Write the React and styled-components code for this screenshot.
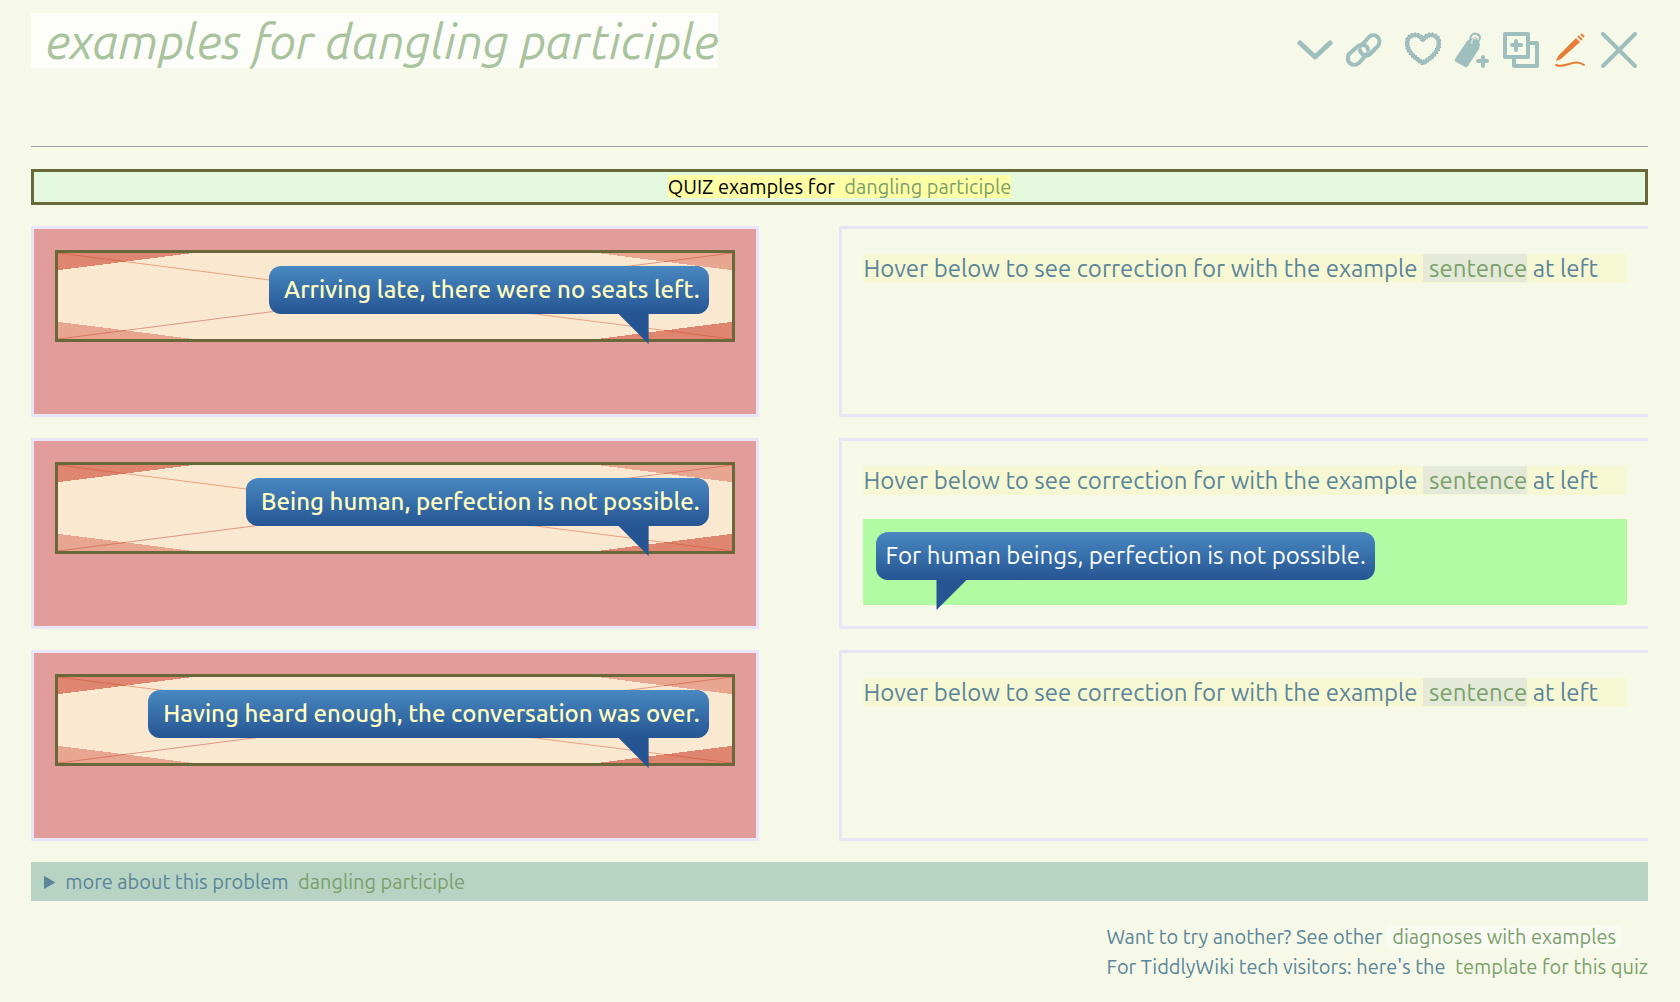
import React, {useState} from 'react'
import styled, {createGlobalStyle} from 'styled-components'


const examples = [
    {id: 1, wrong: 'Arriving late, there were no seats left.', fix: 'When we arrived late, there were no seats left.', open: false},
    {id: 2, wrong: 'Being human, perfection is not possible.', fix: 'For human beings, perfection is not possible.', open: true},
    {id: 3, wrong: 'Having heard enough, the conversation was over.', fix: 'Having heard enough, we ended the conversation.', open: false}
]


const ChevronIcon = () => (
    <svg width="36" height="36" viewBox="0 0 36 36" fill="none" stroke="currentColor" strokeWidth="5" strokeLinecap="round" strokeLinejoin="round">
        <path d="M3 11 L18 25 L33 11" />
    </svg>
)

const LinkIcon = () => (
    <svg width="36" height="36" viewBox="0 0 36 36" fill="none" stroke="currentColor" strokeWidth="4" strokeLinecap="round" strokeLinejoin="round">
        <path d="M15 14 L23 5 C28 0 37 6 32 14 L25 21 C22 25 15 24 14 18" />
        <path d="M21 22 L13 31 C7 36 -1 30 3 22 L11 15 C15 11 22 13 22 18" />
    </svg>
)

const HeartIcon = () => (
    <svg width="36" height="36" viewBox="0 0 36 36" fill="none" strokeLinejoin="round">
        <path d="M18 31 C8 25 2 19 2 11 C2 2 14 0 18 8 C22 0 34 2 34 11 C34 19 28 25 18 31 Z" stroke="#6b8a8a" strokeWidth="5" strokeDasharray="1 2" />
        <path d="M18 31 C8 25 2 19 2 11 C2 2 14 0 18 8 C22 0 34 2 34 11 C34 19 28 25 18 31 Z" stroke="currentColor" strokeWidth="4" />
    </svg>
)

const TagIcon = () => (
    <svg width="36" height="36" viewBox="0 0 36 36" fill="none">
        <path d="M16 7 L22 5 L26 12 L25 17 L14 34 Q13 36 11 35 L2 30 Q0 29 1 27 L13 9 Z" fill="currentColor" />
        <path d="M18 12 C14 6 18 0 23 2 C28 4 26 9 22 12" stroke="currentColor" strokeWidth="2" />
        <path d="M18 12 C17 8 20 5 22 7" stroke="#f6f8e8" strokeWidth="1" />
        <path d="M29 25 V34 M24 29 H33" stroke="currentColor" strokeWidth="4" strokeLinecap="round" />
    </svg>
)

const CloneIcon = () => (
    <svg width="36" height="36" viewBox="0 0 36 36" fill="none" stroke="currentColor" strokeWidth="4" strokeLinejoin="round">
        <path d="M2 2 H25 V25 H2 Z" />
        <path d="M27 11 H34 V34 H11 V27" />
        <path d="M13 9 V18 M9 13 H18" strokeLinecap="round" />
    </svg>
)

const PencilIcon = () => (
    <svg width="36" height="36" viewBox="0 0 36 36">
        <path d="M24 6 L28 10 L9 27 L4 29 L6 24 Z" fill="currentColor" />
        <path d="M26 4 L30 8 M29 2 L32 5" stroke="currentColor" strokeWidth="2" />
        <path d="M4 33 C13 37 22 26 32 33" fill="none" stroke="currentColor" strokeWidth="2" strokeLinecap="round" />
    </svg>
)

const CloseIcon = () => (
    <svg width="36" height="36" viewBox="0 0 36 36" fill="none" stroke="currentColor" strokeWidth="4" strokeLinecap="round">
        <path d="M2 2 L34 34 M34 2 L2 34" />
    </svg>
)


const Example = ({example}) => {

    const [open, setOpen] = useState(example.open)

    return (
        <>
            <WrongCell>
                <Crossed>
                    <Bubble side='right'>{example.wrong}</Bubble>
                </Crossed>
            </WrongCell>

            <FixCell onMouseEnter={() => setOpen(true)} onMouseLeave={() => setOpen(example.open)}>
                <Hint>
                    Hover below to see correction for with the example <SentenceLink href='#sentence'>sentence</SentenceLink> at left
                </Hint>
                <Answer $open={open}>
                    <Bubble side='left'>{example.fix}</Bubble>
                </Answer>
            </FixCell>
        </>
    )
}


const App = () => {

    return (
        <Page>
            <GlobalStyle />

            <Header>
                <Title>examples for dangling participle</Title>

                <Toolbar>
                    <ToolButton aria-label='more actions'><ChevronIcon /></ToolButton>
                    <ToolButton aria-label='permalink' $space><LinkIcon /></ToolButton>
                    <ToolButton aria-label='favorite'><HeartIcon /></ToolButton>
                    <ToolButton aria-label='new tagged'><TagIcon /></ToolButton>
                    <ToolButton aria-label='clone'><CloneIcon /></ToolButton>
                    <ToolButton aria-label='edit' $color='#e67e35'><PencilIcon /></ToolButton>
                    <ToolButton aria-label='close'><CloseIcon /></ToolButton>
                </Toolbar>
            </Header>

            <Rule />

            <QuizBar>
                <mark>QUIZ examples for <TextLink href='#dangling'>dangling participle</TextLink></mark>
            </QuizBar>

            <Grid>
                {examples.map(example => <Example key={example.id} example={example} />)}
            </Grid>

            <More>
                <summary>more about this problem <TextLink href='#dangling'>dangling participle</TextLink></summary>
            </More>

            <Footer>
                <div>
                    <p>Want to try another? See other <TextLink href='#diagnoses' $boxed>diagnoses with examples</TextLink></p>
                    <p>For TiddlyWiki tech visitors: here's the <TextLink href='#template'>template for this quiz</TextLink></p>
                </div>
            </Footer>
        </Page>
    )
}

export default App


const GlobalStyle = createGlobalStyle`
    * {
        box-sizing: border-box;
    }

    body {
        margin: 0;
        background: #f6f8e8;
        color: #5b8599;
        font-family: Ubuntu, 'Noto Sans', sans-serif;
        font-size: 20px;
        line-height: 30px;
    }

    p {
        margin: 0;
    }
`

const Page = styled.div`
    padding: 13px 32px 18px 31px;
`

const Header = styled.header`
    display: flex;
    justify-content: space-between;
    height: 133px;
`

const Title = styled.h1`
    height: 55px;
    margin: 0;
    padding-left: 15px;
    background: #fdfefa;
    color: #a9c39d;
    font-size: 48px;
    font-style: italic;
    font-weight: 400;
    line-height: 56px;
    white-space: nowrap;
`

const Toolbar = styled.div`
    display: flex;
    align-items: flex-start;
    gap: 13px;
    padding: 19px 11px 0 0;
`

const ToolButton = styled.button`
    display: block;
    width: 36px;
    height: 36px;
    margin-right: ${props => props.$space ? '10px' : '0'};
    padding: 0;
    border: none;
    background: none;
    color: ${props => props.$color || '#9fbfbf'};
    cursor: pointer;
`

const Rule = styled.hr`
    height: 1px;
    margin: 0 0 22px;
    border: none;
    background: #9c9f9f;
`

const QuizBar = styled.div`
    margin-bottom: 21px;
    border: 3px solid #68683a;
    background: #e3f8dc;
    text-align: center;

    mark {
        padding: 0;
        background: #ffffa6;
        color: #000;
    }
`

const TextLink = styled.a`
    padding: 0 ${props => props.$boxed ? '6px' : '0'} 0 5px;
    background: ${props => props.$boxed ? '#f9faf2' : 'none'};
    color: #7aa06b;
    text-decoration: none;
`

const Grid = styled.div`
    display: grid;
    grid-template-columns: 45% 50%;
    grid-auto-rows: 1fr;
    gap: 21px 5%;
    margin-bottom: 21px;
`

const WrongCell = styled.div`
    padding: 21px;
    border: 3px solid #e8e5f8;
    background: #e29c99;
`

const FixCell = styled.div`
    padding: 25px 21px 21px;
    border: 3px solid #e8e5f8;
    border-right: none;
`

const Crossed = styled.div`
    display: flex;
    justify-content: flex-end;
    padding: 13px 23px 25px;
    border: 3px solid #68683a;
    background:
        linear-gradient(to bottom right, rgba(204, 68, 48, 0.6) 10%, transparent 10%, transparent calc(50% - 1px), rgba(204, 68, 48, 0.5) 50%, transparent calc(50% + 1px), transparent 90%, rgba(204, 68, 48, 0.6) 90%),
        linear-gradient(to top right, rgba(204, 68, 48, 0.4) 10%, transparent 10%, transparent calc(50% - 1px), rgba(220, 90, 48, 0.5) 50%, transparent calc(50% + 1px), transparent 90%, rgba(204, 68, 48, 0.4) 90%),
        #fbe8d0;
`

const Bubble = styled.div`
    position: relative;
    height: 48px;
    padding: ${props => props.side === 'right' ? '0 9px 0 15px' : '0 9px'};
    border-radius: 12px;
    background: linear-gradient(#4988c1, #255593);
    color: ${props => props.side === 'right' ? '#ffffc0' : '#fff'};
    font-size: 24px;
    font-weight: ${props => props.side === 'right' ? '500' : '400'};
    line-height: 48px;
    white-space: nowrap;

    &::after {
        content: '';
        position: absolute;
        top: 100%;
        ${props => props.side}: 60px;
        width: 30px;
        height: 30px;
        background: #255593;
        clip-path: ${props => props.side === 'right' ? 'polygon(0 0, 100% 0, 100% 100%)' : 'polygon(0 0, 100% 0, 0 100%)'};
    }
`

const Hint = styled.p`
    margin-bottom: 24px;
    background: #f6f8d4;
    font-size: 24px;
    line-height: 29px;
    white-space: nowrap;
`

const SentenceLink = styled.a`
    display: inline-block;
    height: 28px;
    padding-left: 6px;
    background: #e5ead8;
    color: #7aa06b;
    line-height: 29px;
    text-decoration: none;
    vertical-align: top;
`

const Answer = styled.div`
    display: flex;
    padding: 13px 13px 25px;
    background: #b1fca3;
    visibility: ${props => props.$open ? 'visible' : 'hidden'};
`

const More = styled.details`
    margin-bottom: 21px;
    padding: 5px 13px 4px;
    background: #b7d3c3;

    summary {
        cursor: pointer;
    }
`

const Footer = styled.footer`
    display: flex;
    justify-content: flex-end;
`
